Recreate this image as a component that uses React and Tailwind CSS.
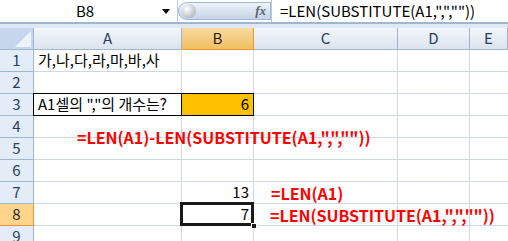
import React from 'react';

const cols = [
  { key: 'A', w: 'w-[148px]' },
  { key: 'B', w: 'w-[72px]' },
  { key: 'C', w: 'w-[144px]' },
  { key: 'D', w: 'w-[72px]' },
  { key: 'E', w: 'flex-1' },
];

const font = "font-['Noto_Sans_CJK_KR','Liberation_Sans',sans-serif]";

function Cell({ w, className = '', children }) {
  return (
    <div className={`${w} h-[22px] shrink-0 border-r border-b border-[#d0d7e5] flex items-center px-1 text-[15px] text-black ${className}`}>
      {children}
    </div>
  );
}

function RowHead({ n, active }) {
  return (
    <div
      className={`w-[34px] h-[22px] shrink-0 border-r border-b flex items-center justify-center text-[15px] ${
        active ? 'bg-[#ffd58d] border-[#f29436] text-[#1f1f1f]' : 'bg-[#e4ecf7] border-[#9eb6ce] text-[#27415f]'
      }`}
    >
      {n}
    </div>
  );
}

export default function App() {
  const rows = [
    { n: 1, A: '가,나,다,라,마,바,사' },
    { n: 2 },
    { n: 3, A: 'A1셀의 ","의 개수는?', B: '6', boxed: true },
    { n: 4 },
    { n: 5 },
    { n: 6 },
    { n: 7, B: '13' },
    { n: 8, B: '7', active: true },
    { n: 9 },
  ];

  return (
    <div className={`w-[508px] h-[241px] overflow-hidden bg-white relative ${font}`}>
      {/* formula bar */}
      <div className="h-[28px] bg-[#dfe8f5] flex flex-col">
        <div className="h-[24px] flex bg-white border-b-2 border-[#9eb6ce]">
          <div className="w-[178px] flex items-center relative border-r border-[#b8c8dc]">
            <span className="flex-1 text-center text-[15px] text-black pl-[8px]">B8</span>
            <svg width="8" height="5" viewBox="0 0 8 5" className="mr-[7px]">
              <path d="M0 0h8L4 5z" fill="#000" />
            </svg>
          </div>
          <div className="w-[93px] my-[2px] rounded-l-full rounded-r-sm bg-gradient-to-b from-[#eef3fa] to-[#c5d3e6] border border-[#a6b9d3] flex items-center justify-between pl-[3px] pr-[4px]">
            <div className="w-[14px] h-[14px] rounded-full bg-[radial-gradient(circle_at_35%_35%,#ffffff,#9aa4b0)]" />
            <span className="font-['Liberation_Serif',serif] italic font-bold text-[13px] text-[#5a6270]">fx</span>
          </div>
          <div className="flex-1 flex items-center pl-[8px] text-[15px] text-black border-l border-[#b8c8dc] whitespace-nowrap">
            =LEN(SUBSTITUTE(A1,",",""))
          </div>
        </div>
      </div>

      {/* header row */}
      <div className="flex">
        <div className="w-[34px] h-[22px] shrink-0 bg-[#c6d6ec] border-r border-b border-[#9eb6ce] flex items-end justify-end p-[2px]">
          <svg width="16" height="16" viewBox="0 0 16 16">
            <path d="M16 0V16H0z" fill="#eef3fa" />
          </svg>
        </div>
        {cols.map((c) => (
          <div
            key={c.key}
            className={`${c.w} h-[22px] shrink-0 border-r border-b flex items-center justify-center text-[15px] ${
              c.key === 'B'
                ? 'bg-gradient-to-b from-[#f9d99f] to-[#f1c15f] border-[#f29436] text-[#1f1f1f]'
                : 'bg-gradient-to-b from-[#f3f6fb] to-[#dbe3ee] border-[#9eb6ce] text-[#27415f]'
            }`}
          >
            {c.key}
          </div>
        ))}
      </div>

      {/* body */}
      {rows.map((r) => (
        <div key={r.n} className="flex">
          <RowHead n={r.n} active={r.active} />
          <Cell w="w-[148px]" className={r.boxed ? 'border-black border-t border-l -ml-px -mt-px h-[23px] w-[149px]' : ''}>
            <span className="whitespace-nowrap">{r.A}</span>
          </Cell>
          <Cell
            w="w-[72px]"
            className={`justify-end ${r.boxed ? 'bg-[#ffc000] border-black border-t -mt-px h-[23px]' : ''} ${
              r.active ? 'relative' : ''
            }`}
          >
            {r.B}
            {r.active && (
              <>
                <div className="absolute -left-[2px] -top-[2px] w-[74px] h-[24px] border-[3px] border-[#1a1a1a]" />
                <div className="absolute -right-[4px] -bottom-[4px] w-[6px] h-[6px] bg-[#1a1a1a] border border-white" />
              </>
            )}
          </Cell>
          <Cell w="w-[144px]" />
          <Cell w="w-[72px]" />
          <Cell w="flex-1" className="border-r-0" />
        </div>
      ))}

      {/* text boxes */}
      <div className="absolute left-[77px] top-[129px] text-[16px] font-bold text-[#ff0000] whitespace-nowrap leading-none">
        =LEN(A1)-LEN(SUBSTITUTE(A1,",",""))
      </div>
      <div className="absolute left-[271px] top-[185px] text-[16px] font-bold text-[#ff0000] whitespace-nowrap leading-none">
        =LEN(A1)
      </div>
      <div className="absolute left-[270px] top-[207px] text-[16px] font-bold text-[#ff0000] whitespace-nowrap leading-none">
        =LEN(SUBSTITUTE(A1,",",""))
      </div>
    </div>
  );
}
